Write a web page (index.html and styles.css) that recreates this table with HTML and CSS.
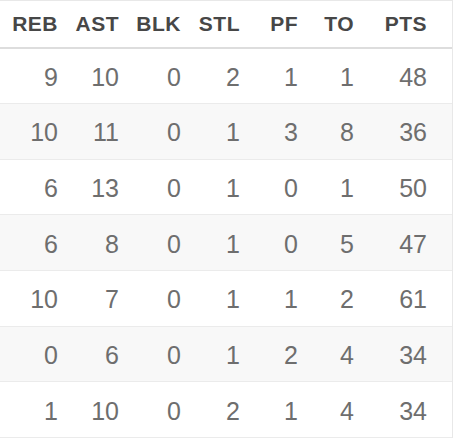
FILE: index.html
```
<!DOCTYPE html>
<html>
<head>
<meta charset="utf-8">
<link rel="stylesheet" href="styles.css">
</head>
<body>
<div class="wrap">
<table class="stats">
<colgroup>
<col class="c1"><col class="c2"><col class="c3"><col class="c4"><col class="c5"><col class="c6"><col class="c7">
</colgroup>
<thead>
<tr><th>REB</th><th>AST</th><th>BLK</th><th>STL</th><th>PF</th><th>TO</th><th class="last">PTS</th></tr>
</thead>
<tbody>
<tr><td>9</td><td>10</td><td>0</td><td>2</td><td>1</td><td>1</td><td class="last">48</td></tr>
<tr><td>10</td><td>11</td><td>0</td><td>1</td><td>3</td><td>8</td><td class="last">36</td></tr>
<tr><td>6</td><td>13</td><td>0</td><td>1</td><td>0</td><td>1</td><td class="last">50</td></tr>
<tr><td>6</td><td>8</td><td>0</td><td>1</td><td>0</td><td>5</td><td class="last">47</td></tr>
<tr><td>10</td><td>7</td><td>0</td><td>1</td><td>1</td><td>2</td><td class="last">61</td></tr>
<tr><td>0</td><td>6</td><td>0</td><td>1</td><td>2</td><td>4</td><td class="last">34</td></tr>
<tr><td>1</td><td>10</td><td>0</td><td>2</td><td>1</td><td>4</td><td class="last">34</td></tr>
</tbody>
</table>
</div>
</body>
</html>
```
FILE: styles.css
```
html, body {
  margin: 0;
  padding: 0;
  background: #ffffff;
}
.wrap {
  width: 452px;
  border-top: 1px solid #e8e8e8;
  border-right: 1px solid #e8e8e8;
}
.stats {
  border-collapse: collapse;
  table-layout: fixed;
  width: 452px;
  font-family: "Liberation Sans", Arial, sans-serif;
}
.c1 { width: 66px; }
.c2 { width: 61px; }
.c3 { width: 62px; }
.c4 { width: 59px; }
.c5 { width: 58px; }
.c6 { width: 56px; }
.c7 { width: 90px; }
.stats th {
  height: 46px;
  padding: 0 8px 0 0;
  text-align: right;
  vertical-align: middle;
  font-size: 21px;
  font-weight: bold;
  letter-spacing: 0.5px;
  color: #474747;
  border-bottom: 2px solid #dddddd;
}
.stats td {
  height: 55.67px;
  padding: 3px 8px 0 0;
  box-sizing: border-box;
  text-align: right;
  vertical-align: middle;
  font-size: 25px;
  color: #6e6e6e;
  border-bottom: 1px solid #ebebeb;
}
.stats .last {
  padding-right: 25px;
}
.stats tbody tr:nth-child(even) {
  background: #f8f8f8;
}
```
